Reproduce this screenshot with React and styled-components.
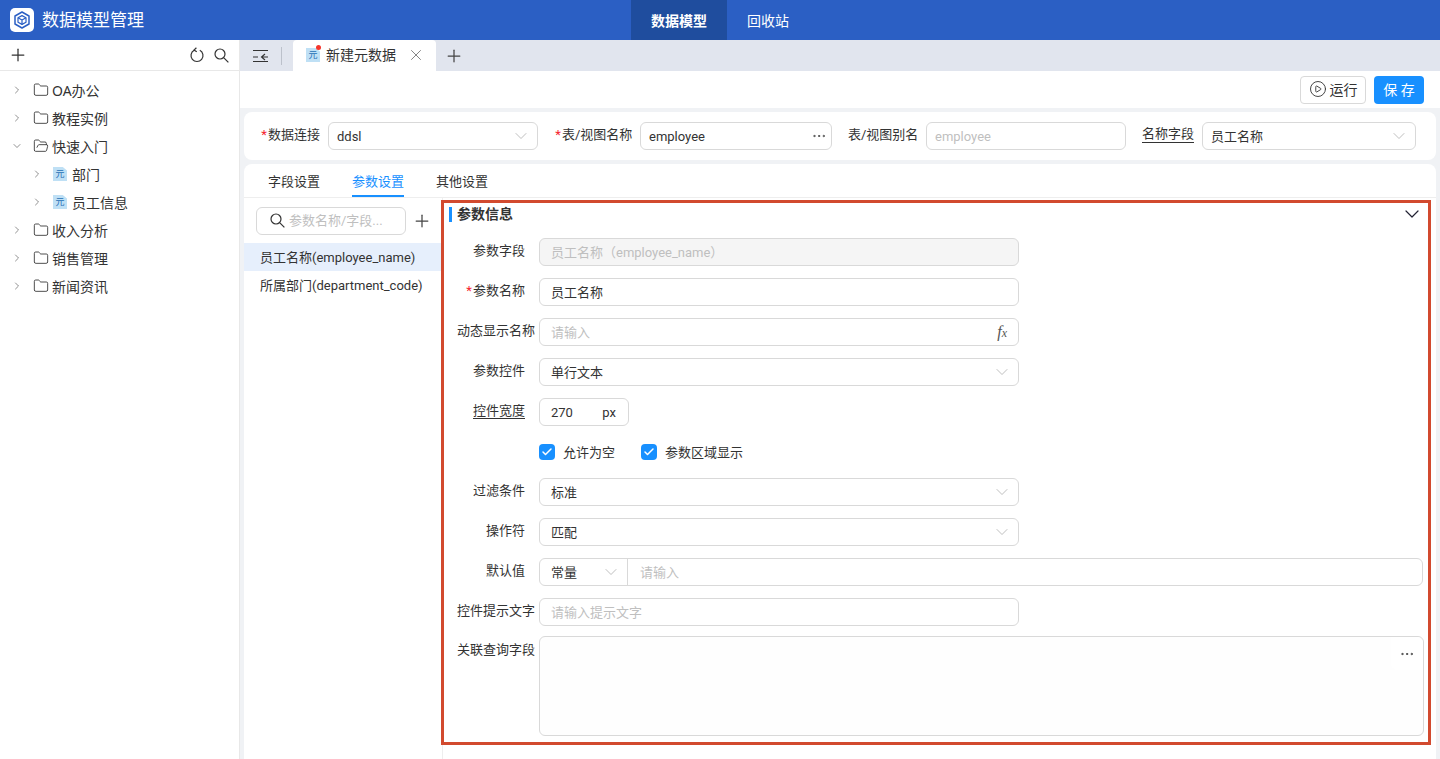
import styled, { createGlobalStyle } from 'styled-components'
import { Plus, ChevronRight, ChevronDown, Folder, FolderOpen, X, CirclePlay, Ellipsis, Check } from 'lucide-react'

const GlobalStyle = createGlobalStyle`
    html, body { margin: 0; padding: 0; height: 100%; }
    body {
        font-family: Roboto, "Noto Sans CJK SC", sans-serif;
        font-size: 13px;
        color: #333;
        background: #fff;
        overflow: hidden;
    }
    * { box-sizing: border-box; }
`

const TREE = [
    { name: 'OA办公' },
    { name: '教程实例' },
    { name: '快速入门', open: true },
    { name: '部门', leaf: true },
    { name: '员工信息', leaf: true },
    { name: '收入分析' },
    { name: '销售管理' },
    { name: '新闻资讯' },
]

const LogoIcon = () => (
    <svg width="18" height="18" viewBox="0 0 18 18" fill="none" stroke="#2b5fc4" strokeWidth="1.5" strokeLinejoin="round">
        <path d="M9 1 16 5v8L9 17 2 13V5z" />
        <path d="M9 4.6 13 6.8v4.4L9 13.4 5 11.2V6.8z" strokeWidth="1.2" />
        <path d="M5 6.8 9 9l4-2.2M9 9v4.4" strokeWidth="1.2" />
    </svg>
)

const CollapseIcon = () => (
    <svg width="18" height="16" viewBox="0 0 18 16" fill="none" stroke="#333" strokeWidth="1.1">
        <path d="M1 2.5h15M1 9h5M1 13.5h15M16 9H10M13 6 9.5 9l3.5 3" />
    </svg>
)

const RefreshIcon = () => (
    <svg width="16" height="16" viewBox="0 0 16 16" fill="none" stroke="#333" strokeWidth="1.2">
        <path d="M5.2 3.2a6 6 0 1 0 5.6 0" />
        <path d="M7.4.8 5 3.1l2.8 1.7" />
    </svg>
)

const SearchIcon = () => (
    <svg width="15" height="15" viewBox="0 0 15 15" fill="none" stroke="#333" strokeWidth="1.2">
        <circle cx="6" cy="6" r="5" />
        <path d="M9.6 9.6 14.4 14.4" />
    </svg>
)

const App = () => {
    return (
        <Page>
            <GlobalStyle />
            <Header>
                <Brand>
                    <Logo><LogoIcon /></Logo>
                    <BrandName>数据模型管理</BrandName>
                </Brand>
                <Nav>
                    <NavItem active>数据模型</NavItem>
                    <NavItem>回收站</NavItem>
                </Nav>
            </Header>
            <Body>
                <Sidebar>
                    <SideTools>
                        <SideAdd size={20} strokeWidth={1.5} />
                        <SideToolsRight>
                            <RefreshIcon />
                            <SearchIcon />
                        </SideToolsRight>
                    </SideTools>
                    <Tree>
                        {TREE.map((item) => (
                            <TreeRow key={item.name} leaf={item.leaf}>
                                <Caret>
                                    {item.open ? <ChevronDown size={12} strokeWidth={1.3} /> : <ChevronRight size={12} strokeWidth={1.3} />}
                                </Caret>
                                {item.leaf ? <MetaIcon>元</MetaIcon> : item.open ? <FolderOpen size={16} strokeWidth={1.2} color="#222" /> : <Folder size={16} strokeWidth={1.2} color="#222" />}
                                <TreeText>{item.name}</TreeText>
                            </TreeRow>
                        ))}
                    </Tree>
                </Sidebar>
                <Main>
                    <TabBar>
                        <CollapseBtn><CollapseIcon /></CollapseBtn>
                        <TabDivider />
                        <Tab>
                            <TabIconWrap>
                                <MetaIcon>元</MetaIcon>
                                <RedDot />
                            </TabIconWrap>
                            <TabTitle>新建元数据</TabTitle>
                            <X size={18} strokeWidth={1.2} color="#777" />
                        </Tab>
                        <TabAdd><Plus size={20} strokeWidth={1.5} /></TabAdd>
                    </TabBar>
                    <ActionBar>
                        <RunButton><CirclePlay size={18} strokeWidth={1.2} />运行</RunButton>
                        <SaveButton>保 存</SaveButton>
                    </ActionBar>
                    <Content>
                        <TopForm>
                            <TopField>
                                <TopLabel width={60}><Star>*</Star>数据连接</TopLabel>
                                <TopControl width={210} latin>ddsl<Arrow /></TopControl>
                            </TopField>
                            <TopField>
                                <TopLabel width={78}><Star>*</Star>表/视图名称</TopLabel>
                                <TopControl width={192} latin>employee<Dots><Ellipsis size={16} strokeWidth={1.2} /></Dots></TopControl>
                            </TopField>
                            <TopField>
                                <TopLabel width={70}>表/视图别名</TopLabel>
                                <TopControl width={200} latin placeholder>employee</TopControl>
                            </TopField>
                            <TopField>
                                <TopLabel width={52} underline>名称字段</TopLabel>
                                <TopControl width={214}>员工名称<Arrow /></TopControl>
                            </TopField>
                        </TopForm>
                        <Card>
                            <SubTabs>
                                <SubTab>字段设置</SubTab>
                                <SubTab active>参数设置</SubTab>
                                <SubTab>其他设置</SubTab>
                            </SubTabs>
                            <CardBody>
                                <ParamList>
                                    <ParamSearchRow>
                                        <ParamSearch>
                                            <SearchIcon />
                                            <ParamSearchText>参数名称/字段...</ParamSearchText>
                                        </ParamSearch>
                                        <Plus size={20} strokeWidth={1.5} color="#444" />
                                    </ParamSearchRow>
                                    <ParamItem active>员工名称(employee_name)</ParamItem>
                                    <ParamItem>所属部门(department_code)</ParamItem>
                                </ParamList>
                                <ParamDetail>
                                    <Panel>
                                        <PanelHead>
                                            <PanelTitle>参数信息</PanelTitle>
                                            <ChevronDown size={24} strokeWidth={1.2} color="#223" />
                                        </PanelHead>
                                        <FormGrid>
                                            <FormRow>
                                                <RowLabel>参数字段</RowLabel>
                                                <Control width={480} disabled>员工名称（employee_name）</Control>
                                            </FormRow>
                                            <FormRow>
                                                <RowLabel><Star>*</Star>参数名称</RowLabel>
                                                <Control width={480}>员工名称</Control>
                                            </FormRow>
                                            <FormRow>
                                                <RowLabel wide>动态显示名称</RowLabel>
                                                <Control width={480} placeholder>请输入<Fx>f<FxSub>x</FxSub></Fx></Control>
                                            </FormRow>
                                            <FormRow>
                                                <RowLabel>参数控件</RowLabel>
                                                <Control width={480}>单行文本<Arrow /></Control>
                                            </FormRow>
                                            <FormRow>
                                                <RowLabel underline>控件宽度</RowLabel>
                                                <Control width={90} latin>270<Unit>px</Unit></Control>
                                            </FormRow>
                                            <FormRow>
                                                <RowLabel />
                                                <CheckItem><CheckBox><Check size={12} strokeWidth={3} color="#fff" /></CheckBox><CheckText>允许为空</CheckText></CheckItem>
                                                <CheckItem><CheckBox><Check size={12} strokeWidth={3} color="#fff" /></CheckBox><CheckText>参数区域显示</CheckText></CheckItem>
                                            </FormRow>
                                            <FormRow>
                                                <RowLabel>过滤条件</RowLabel>
                                                <Control width={480}>标准<Arrow /></Control>
                                            </FormRow>
                                            <FormRow>
                                                <RowLabel>操作符</RowLabel>
                                                <Control width={480}>匹配<Arrow /></Control>
                                            </FormRow>
                                            <FormRow>
                                                <RowLabel>默认值</RowLabel>
                                                <ComboControl>
                                                    <ComboType>常量<Arrow /></ComboType>
                                                    <ComboInput>请输入</ComboInput>
                                                </ComboControl>
                                            </FormRow>
                                            <FormRow>
                                                <RowLabel wide>控件提示文字</RowLabel>
                                                <Control width={480} placeholder>请输入提示文字</Control>
                                            </FormRow>
                                            <FormRow tall>
                                                <RowLabel wide tall>关联查询字段</RowLabel>
                                                <TextArea>
                                                    <AreaAction><Ellipsis size={16} strokeWidth={1.3} /></AreaAction>
                                                </TextArea>
                                            </FormRow>
                                        </FormGrid>
                                    </Panel>
                                </ParamDetail>
                            </CardBody>
                        </Card>
                    </Content>
                </Main>
            </Body>
        </Page>
    )
}

export default App;

const Page = styled.div`
    display: flex;
    flex-direction: column;
    height: 100vh;
    overflow: hidden;
`

const Header = styled.header`
    flex: 0 0 40px;
    display: flex;
    align-items: center;
    background: #2b5fc4;
    color: #fff;
`

const Brand = styled.div`
    display: flex;
    align-items: center;
    gap: 8px;
    padding-left: 10px;
    width: 631px;
`

const Logo = styled.div`
    width: 24px;
    height: 24px;
    border-radius: 5px;
    background: #fff;
    display: flex;
    align-items: center;
    justify-content: center;
`

const BrandName = styled.div`
    font-size: 17px;
    line-height: 24px;
`

const Nav = styled.nav`
    display: flex;
    height: 100%;
`

const NavItem = styled.div`
    display: flex;
    align-items: center;
    justify-content: center;
    padding: 0 20px;
    font-size: 14px;
    font-weight: ${props => props.active ? 'bold' : 'normal'};
    background: ${props => props.active ? '#1f4d9e' : 'transparent'};
`

const Body = styled.div`
    flex: 1;
    display: flex;
    min-height: 0;
`

const Sidebar = styled.aside`
    flex: 0 0 240px;
    border-right: 1px solid #e8e8e8;
    display: flex;
    flex-direction: column;
`

const SideTools = styled.div`
    height: 31px;
    display: flex;
    align-items: center;
    justify-content: space-between;
    padding: 0 10px;
    border-bottom: 1px solid #e8e8e8;
    color: #333;
`

const SideAdd = styled(Plus)`
    margin-left: -2px;
`

const SideToolsRight = styled.div`
    display: flex;
    align-items: center;
    gap: 9px;
`

const Tree = styled.div`
    padding-top: 5px;
`

const TreeRow = styled.div`
    height: 28px;
    display: flex;
    align-items: center;
    padding-left: ${props => props.leaf ? '31px' : '11px'};
    gap: 3px;
    font-size: 14px;
    line-height: 20px;
    color: #333;
`

const TreeText = styled.span`
    margin-top: 2px;
    font-family: "Noto Sans", "Noto Sans CJK SC", sans-serif;
`

const Caret = styled.span`
    width: 12px;
    margin-right: 7px;
    display: flex;
    color: #555;
`

const MetaIcon = styled.span`
    width: 14px;
    height: 14px;
    margin-right: 2px;
    display: inline-flex;
    align-items: center;
    justify-content: center;
    font-size: 9px;
    line-height: 1;
    color: #1f6fb5;
    background: #bfe0f5;
    clip-path: polygon(0 0, 70% 0, 100% 25%, 100% 100%, 0 100%);
`

const Main = styled.main`
    flex: 1;
    min-width: 0;
    display: flex;
    flex-direction: column;
`

const TabBar = styled.div`
    flex: 0 0 31px;
    display: flex;
    align-items: stretch;
    background: #e1e5ee;
`

const CollapseBtn = styled.div`
    width: 41px;
    display: flex;
    align-items: center;
    justify-content: center;
    padding-left: 1px;
`

const TabDivider = styled.div`
    width: 1px;
    height: 18px;
    margin: 7px 11px 0 0;
    background: #bcc1cb;
`

const Tab = styled.div`
    width: 143px;
    display: flex;
    align-items: center;
    padding: 0 11px 1px 13px;
    background: #fff;
    border-radius: 4px 4px 0 0;
`

const TabIconWrap = styled.div`
    position: relative;
    display: flex;
    margin-right: 4px;
`

const RedDot = styled.span`
    position: absolute;
    top: -3px;
    right: 1px;
    width: 5px;
    height: 5px;
    border-radius: 50%;
    background: #f5352b;
`

const TabTitle = styled.span`
    flex: 1;
    font-size: 14px;
    line-height: 20px;
`

const TabAdd = styled.div`
    width: 36px;
    display: flex;
    align-items: center;
    justify-content: center;
    color: #444;
`

const ActionBar = styled.div`
    flex: 0 0 37px;
    display: flex;
    align-items: center;
    justify-content: flex-end;
    gap: 8px;
    padding-right: 16px;
`

const RunButton = styled.div`
    width: 66px;
    height: 28px;
    display: flex;
    align-items: center;
    justify-content: center;
    gap: 3px;
    padding-bottom: 1px;
    font-size: 14px;
    border: 1px solid #d9d9d9;
    border-radius: 4px;
`

const SaveButton = styled.div`
    width: 50px;
    height: 28px;
    display: flex;
    align-items: center;
    justify-content: center;
    padding-bottom: 2px;
    font-size: 14px;
    color: #fff;
    background: #1890ff;
    border-radius: 4px;
`

const Content = styled.div`
    flex: 1;
    min-height: 0;
    display: flex;
    flex-direction: column;
    gap: 4px;
    padding: 4px 4px 0;
    background: #f0f2f5;
`

const TopForm = styled.div`
    height: 48px;
    display: flex;
    align-items: center;
    gap: 16px;
    padding: 0 16px;
    background: #fff;
    border-radius: 8px;
`

const TopField = styled.div`
    display: flex;
    align-items: center;
    gap: 8px;
`

const TopLabel = styled.label`
    flex: 0 0 ${props => props.width}px;
    min-width: 0;
    margin-top: -4px;
    font-size: 13px;
    line-height: 17px;
    white-space: nowrap;
    ${props => props.underline ? 'border-bottom: 1px solid #333;' : ''}
`

const Star = styled.span`
    display: inline-block;
    width: 8px;
    text-align: center;
    color: #f5222d;
`

const Control = styled.div`
    flex: 0 0 auto;
    width: ${props => props.width}px;
    height: 28px;
    display: flex;
    align-items: center;
    padding: 0 12px ${props => props.latin ? '0' : '1px'} 11px;
    font-size: 13px;
    white-space: nowrap;
    border: 1px solid #d9d9d9;
    border-radius: 6px;
    background: ${props => props.disabled ? '#f5f5f5' : '#fff'};
    color: ${props => (props.placeholder || props.disabled) ? '#bfbfbf' : '#333'};
`

const TopControl = styled(Control)`
    padding-left: 8px;
`

const ArrowMark = styled(ChevronDown)`
    margin-left: auto;
    margin-right: -6px;
    color: #b8b8b8;
    flex: none;
`

const Arrow = () => <ArrowMark size={20} strokeWidth={1.1} />

const Dots = styled.span`
    margin-left: auto;
    margin-right: -8px;
    display: flex;
    color: #333;
`

const Fx = styled.span`
    margin-left: auto;
    margin-right: -1px;
    font-family: "Liberation Serif", serif;
    font-style: italic;
    font-size: 16px;
    color: #555;
`

const FxSub = styled.span`
    font-size: 12px;
`

const Unit = styled.span`
    margin-left: auto;
    color: #333;
`

const Card = styled.section`
    flex: 1;
    min-height: 0;
    display: flex;
    flex-direction: column;
    background: #fff;
    border-radius: 8px 8px 0 0;
`

const SubTabs = styled.div`
    flex: 0 0 34px;
    display: flex;
    gap: 32px;
    padding-left: 24px;
    border-bottom: 1px solid #eee;
`

const SubTab = styled.div`
    display: flex;
    align-items: center;
    font-size: 13px;
    padding-top: 1px;
    color: ${props => props.active ? '#1890ff' : '#333'};
    border-bottom: 2px solid ${props => props.active ? '#1890ff' : 'transparent'};
`

const CardBody = styled.div`
    flex: 1;
    min-height: 0;
    display: flex;
`

const ParamList = styled.div`
    flex: 0 0 199px;
    border-right: 1px solid #eee;
`

const ParamSearchRow = styled.div`
    height: 45px;
    display: flex;
    align-items: center;
    gap: 6px;
    padding: 0 0 0 12px;
`

const ParamSearch = styled.div`
    width: 150px;
    height: 28px;
    display: flex;
    align-items: center;
    gap: 4px;
    padding-left: 13px;
    font-size: 13px;
    color: #bfbfbf;
    border: 1px solid #d9d9d9;
    border-radius: 6px;
    white-space: nowrap;
`

const ParamSearchText = styled.span`
    margin-top: -3px;
`

const ParamItem = styled.div`
    height: 28px;
    display: flex;
    align-items: center;
    padding: 0 0 2px 16px;
    font-size: 13px;
    white-space: nowrap;
    background: ${props => props.active ? '#e6effc' : 'transparent'};
`

const ParamDetail = styled.div`
    flex: 1;
    min-width: 0;
    padding: 2px 5px 0 0;
`

const Panel = styled.div`
    margin-left: -2px;
    height: 545px;
    padding: 0 4px 0 5px;
    border: 3px solid #d24a2f;
`

const PanelHead = styled.div`
    height: 22px;
    margin-bottom: 13px;
    display: flex;
    align-items: center;
    justify-content: space-between;
`

const PanelTitle = styled.div`
    padding-left: 5px;
    border-left: 3px solid #1890ff;
    font-size: 14px;
    font-weight: bold;
    line-height: 15px;
`

const FormGrid = styled.div`
    display: flex;
    flex-direction: column;
    gap: 12px;
`

const FormRow = styled.div`
    display: flex;
    align-items: ${props => props.tall ? 'flex-start' : 'center'};
    height: ${props => props.tall ? '100px' : '28px'};
    ${props => props.tall ? 'margin-top: -2px;' : ''}
`

const RowLabel = styled.label`
    flex: 0 0 90px;
    margin-top: ${props => props.tall ? '5px' : '-4px'};
    padding-right: ${props => props.wide ? '4px' : '14px'};
    text-align: right;
    font-size: 13px;
    line-height: 17px;
    white-space: nowrap;
    ${props => props.underline ? 'text-decoration: underline; text-underline-offset: 3px;' : ''}
`

const CheckItem = styled.div`
    display: flex;
    align-items: center;
    gap: 8px;
    margin-right: 26px;
    font-size: 13px;
`

const CheckText = styled.span`
    margin-top: -2px;
`

const CheckBox = styled.span`
    width: 16px;
    height: 16px;
    display: flex;
    align-items: center;
    justify-content: center;
    background: #1890ff;
    border-radius: 4px;
`

const ComboControl = styled.div`
    flex: 1;
    height: 28px;
    margin-right: 1px;
    display: flex;
    border: 1px solid #d9d9d9;
    border-radius: 6px;
`

const ComboType = styled.div`
    flex: 0 0 88px;
    display: flex;
    align-items: center;
    padding: 0 12px 1px 11px;
    border-right: 1px solid #d9d9d9;
    font-size: 13px;
`

const ComboInput = styled.div`
    display: flex;
    align-items: center;
    padding: 0 0 1px 12px;
    color: #bfbfbf;
    font-size: 13px;
`

const TextArea = styled.div`
    position: relative;
    flex: 1;
    height: 100px;
    border: 1px solid #d9d9d9;
    border-radius: 6px;
    background: #fefefe;
`

const AreaAction = styled.div`
    position: absolute;
    top: 0;
    right: 0;
    width: 32px;
    height: 33px;
    display: flex;
    align-items: center;
    justify-content: center;
    background: #fff;
    border-radius: 0 6px 0 6px;
`
